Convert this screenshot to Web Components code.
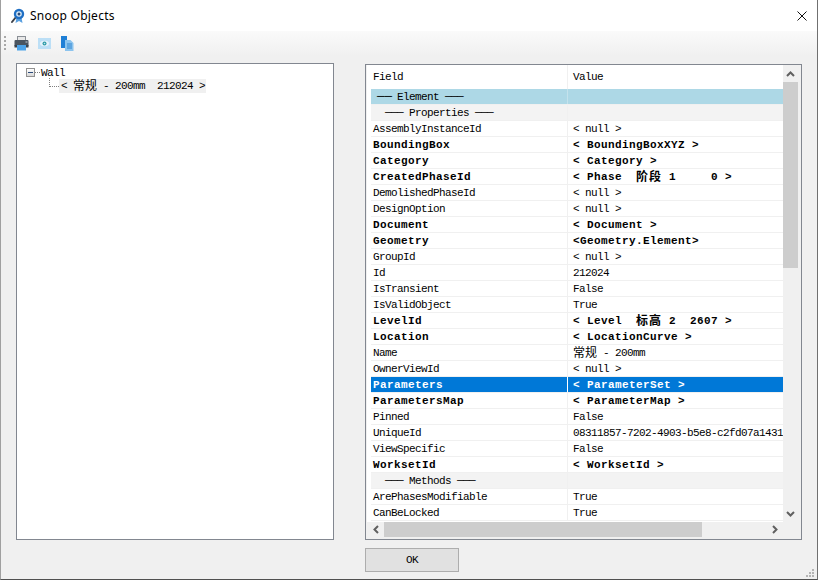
<!DOCTYPE html>
<html>
<head>
<meta charset="utf-8">
<title>Snoop Objects</title>
<style>
  html, body { margin: 0; padding: 0; background: #f0f0f0; }
  snoop-row .c { font-size: 12px; letter-spacing: 0; vertical-align: -1px; }
  snoop-row[kind="bold"] .c { letter-spacing: 1px; }
  snoop-row .d1 { font-size: 12.5px; letter-spacing: 0; margin-right: 5px; }
</style>
</head>
<body>
<snoop-window>
  <snoop-titlebar slot="title">Snoop Objects</snoop-titlebar>
  <snoop-toolbar slot="tools"></snoop-toolbar>
  <snoop-tree slot="left"></snoop-tree>
  <snoop-grid slot="right">
    <snoop-row kind="group"><span slot="field"><span class="d1">──</span>Element ───</span></snoop-row>
    <snoop-row kind="sub"><span slot="field">─── Properties ───</span></snoop-row>
    <snoop-row><span slot="field">AssemblyInstanceId</span>&lt; null &gt;</snoop-row>
    <snoop-row kind="bold"><span slot="field">BoundingBox</span>&lt; BoundingBoxXYZ &gt;</snoop-row>
    <snoop-row kind="bold"><span slot="field">Category</span>&lt; Category &gt;</snoop-row>
    <snoop-row kind="bold"><span slot="field">CreatedPhaseId</span>&lt; Phase  <span class="c">阶段</span> 1     0 &gt;</snoop-row>
    <snoop-row><span slot="field">DemolishedPhaseId</span>&lt; null &gt;</snoop-row>
    <snoop-row><span slot="field">DesignOption</span>&lt; null &gt;</snoop-row>
    <snoop-row kind="bold"><span slot="field">Document</span>&lt; Document &gt;</snoop-row>
    <snoop-row kind="bold"><span slot="field">Geometry</span>&lt;Geometry.Element&gt;</snoop-row>
    <snoop-row><span slot="field">GroupId</span>&lt; null &gt;</snoop-row>
    <snoop-row><span slot="field">Id</span>212024</snoop-row>
    <snoop-row><span slot="field">IsTransient</span>False</snoop-row>
    <snoop-row><span slot="field">IsValidObject</span>True</snoop-row>
    <snoop-row kind="bold"><span slot="field">LevelId</span>&lt; Level  <span class="c">标高</span> 2  2607 &gt;</snoop-row>
    <snoop-row kind="bold"><span slot="field">Location</span>&lt; LocationCurve &gt;</snoop-row>
    <snoop-row><span slot="field">Name</span><span class="c">常规</span> - 200mm</snoop-row>
    <snoop-row><span slot="field">OwnerViewId</span>&lt; null &gt;</snoop-row>
    <snoop-row kind="selected"><span slot="field">Parameters</span>&lt; ParameterSet &gt;</snoop-row>
    <snoop-row kind="bold"><span slot="field">ParametersMap</span>&lt; ParameterMap &gt;</snoop-row>
    <snoop-row><span slot="field">Pinned</span>False</snoop-row>
    <snoop-row><span slot="field">UniqueId</span>08311857-7202-4903-b5e8-c2fd07a1431</snoop-row>
    <snoop-row><span slot="field">ViewSpecific</span>False</snoop-row>
    <snoop-row kind="bold"><span slot="field">WorksetId</span>&lt; WorksetId &gt;</snoop-row>
    <snoop-row kind="sub"><span slot="field">─── Methods ───</span></snoop-row>
    <snoop-row><span slot="field">ArePhasesModifiable</span>True</snoop-row>
    <snoop-row><span slot="field">CanBeLocked</span>True</snoop-row>
  </snoop-grid>
  <snoop-button slot="action">OK</snoop-button>
</snoop-window>

<script>
const MONO = `"Liberation Mono", "Noto Sans CJK SC", monospace`;

class SnoopWindow extends HTMLElement {
  connectedCallback() {
    this.attachShadow({ mode: 'open' });
    this.shadowRoot.innerHTML = `
      <style>
        :host {
          display: flex;
          flex-direction: column;
          position: relative;
          box-sizing: border-box;
          width: 818px;
          height: 580px;
          background: #f0f0f0;
          border-left: 1px solid #a0a0a0;
          border-right: 1px solid #707070;
          border-bottom: 1px solid #505050;
          overflow: hidden;
        }
        .panes {
          display: grid;
          grid-template-columns: 318px 437px;
          column-gap: 31px;
          height: 477px;
          padding: 7px 0 0 15px;
        }
        .foot {
          display: flex;
          justify-content: flex-start;
          padding: 8px 0 0 364px;
        }
        .grip {
          position: absolute;
          right: 2px;
          bottom: 1px;
        }
      </style>
      <slot name="title"></slot>
      <slot name="tools"></slot>
      <div class="panes"><slot name="left"></slot><slot name="right"></slot></div>
      <div class="foot"><slot name="action"></slot></div>
      <svg class="grip" width="9" height="9" viewBox="0 0 9 9" fill="#b4b4b4">
        <rect x="6" y="0" width="2" height="2"/>
        <rect x="3" y="3" width="2" height="2"/><rect x="6" y="3" width="2" height="2"/>
        <rect x="0" y="6" width="2" height="2"/><rect x="3" y="6" width="2" height="2"/><rect x="6" y="6" width="2" height="2"/>
      </svg>`;
  }
}

class SnoopTitlebar extends HTMLElement {
  connectedCallback() {
    this.attachShadow({ mode: 'open' });
    this.shadowRoot.innerHTML = `
      <style>
        :host {
          display: flex;
          align-items: center;
          height: 31px;
          background: #fff;
          padding: 0 10px 0 9px;
          gap: 4px;
          font: 12px "Noto Sans", "Open Sans", sans-serif;
          letter-spacing: 0.25px;
          color: #000;
        }
        .text { flex: 1; }
      </style>
      <svg width="16" height="16" viewBox="0 0 16 16">
        <path d="M6 9 L2 14" stroke="#3c4048" stroke-width="2" stroke-linecap="round"/>
        <path d="M6.5 9.5 L5.5 15 L9 13 L12.5 15 L11.5 9.5z" fill="#5aa0e0"/>
        <circle cx="9" cy="6" r="5.2" fill="#1f6fc4"/>
        <circle cx="9" cy="6" r="2.8" fill="#dcecf8"/>
        <circle cx="9" cy="6" r="1.5" fill="#2c4c78"/>
      </svg>
      <span class="text"><slot></slot></span>
      <svg width="10" height="10" viewBox="0 0 10 10">
        <path d="M.5 .5 L9.5 9.5 M9.5 .5 L.5 9.5" stroke="#111" stroke-width="1" fill="none"/>
      </svg>`;
  }
}

class SnoopToolbar extends HTMLElement {
  connectedCallback() {
    this.attachShadow({ mode: 'open' });
    this.shadowRoot.innerHTML = `
      <style>
        :host {
          display: flex;
          align-items: center;
          height: 25px;
          padding-left: 3px;
          background: linear-gradient(#fafafa, #f0f0f0);
        }
        .dots {
          width: 2px;
          height: 15px;
          margin-right: 8px;
          background: repeating-linear-gradient(#a8a8a8 0 2px, transparent 2px 4px);
        }
        svg { display: block; margin-right: 8px; }
      </style>
      <div class="dots"></div>
      <svg width="15" height="15" viewBox="0 0 15 15">
        <rect x="3.5" y="0.5" width="8" height="4" fill="#e8e8e8" stroke="#8a8f96"/>
        <rect x="0.5" y="4" width="14" height="6.5" rx="1" fill="#4a5560"/>
        <rect x="0.5" y="9" width="14" height="2.5" fill="#39424c"/>
        <rect x="3" y="9" width="9" height="5.5" fill="#4da3e8"/>
        <rect x="11.5" y="5.5" width="2" height="1" fill="#c8d0d8"/>
      </svg>
      <svg width="16" height="15" viewBox="0 0 16 15" style="margin-left:0">
        <rect x="1" y="2" width="13" height="11" fill="#bcdff6"/>
        <ellipse cx="7.5" cy="7.5" rx="4.5" ry="2.7" fill="#e6f3fb"/>
        <circle cx="7.5" cy="7.5" r="2" fill="#2e9aa8"/>
        <circle cx="7.5" cy="7.5" r="0.8" fill="#bfe6ea"/>
      </svg>
      <svg width="15" height="16" viewBox="0 0 15 16">
        <path d="M0 0 H6 V10 H4 V12 H0z" fill="#1f7fd6"/>
        <path d="M4 4 H9.5 L12.5 7 V15 H4z" fill="#8cc4ee"/>
        <path d="M6 8 H11 M6 10 H11 M6 12 H11" stroke="#2f86d2" stroke-width="1"/>
      </svg>`;
  }
}

class SnoopTree extends HTMLElement {
  connectedCallback() {
    this.attachShadow({ mode: 'open' });
    this.shadowRoot.innerHTML = `
      <style>
        :host {
          display: block;
          box-sizing: border-box;
          height: 477px;
          background: #fff;
          border: 1px solid #828790;
          padding: 2px 0 0 9px;
          font: 11px/14px ${MONO};
          letter-spacing: -0.6px;
          color: #000;
        }
        .node { display: flex; align-items: center; height: 13px; }
        .box {
          box-sizing: border-box;
          width: 9px;
          height: 9px;
          border: 1px solid #919191;
          background: linear-gradient(#fff, #d8d8d8);
          display: flex;
          align-items: center;
          justify-content: center;
        }
        .box::after { content: ""; width: 5px; height: 1px; background: #2a4a7a; }
        .stub { width: 5px; border-top: 1px dotted #808080; margin-right: 1px; }
        .child { padding-left: 23px; height: 14px; }
        .elbow {
          width: 9px;
          height: 8px;
          margin-top: -7px;
          border-left: 1px dotted #808080;
          border-bottom: 1px dotted #808080;
        }
        .sel { background: #f0f0f0; padding: 0 1px 0 2px; white-space: pre; height: 14px; }
        .c { font-size: 12px; letter-spacing: 0; vertical-align: -1px; }
      </style>
      <div class="node"><span class="box"></span><span class="stub"></span><span>Wall</span></div>
      <div class="node child"><span class="elbow"></span><span class="sel">&lt; <span class="c">常规</span> - 200mm  212024 &gt;</span></div>`;
  }
}

class SnoopGrid extends HTMLElement {
  connectedCallback() {
    this.attachShadow({ mode: 'open' });
    this.shadowRoot.innerHTML = `
      <style>
        :host {
          display: grid;
          grid-template-columns: 1fr 17px;
          grid-template-rows: 457px 15px;
          box-sizing: border-box;
          height: 476px;
          margin-top: 1px;
          background: #f0f0f0;
          border: 1px solid #828790;
          padding: 0 1px 2px 1px;
          font: 11px/16px ${MONO};
          letter-spacing: -0.6px;
          color: #000;
        }
        .table { background: #fff; overflow: hidden; }
        .head {
          display: grid;
          grid-template-columns: 196px 1fr;
          height: 24px;
          line-height: 25px;
          margin-left: 4px;
        }
        .head span { padding-left: 2px; }
        .head span + span { border-left: 1px solid #f0f0f0; padding-left: 5px; }
        .vbar, .hbar { background: #f0f0f0; display: flex; }
        .vbar { flex-direction: column; align-items: flex-start; }
        .btn { display: flex; align-items: center; justify-content: center; flex: none; }
        .vbar .btn { width: 15px; height: 17px; }
        .vbar .thumb { width: 15px; height: 186px; background: #cdcdcd; flex: none; }
        .vbar .fill { flex: 1; }
        .hbar { grid-column: 1; align-items: stretch; }
        .hbar .btn { width: 17px; }
        .hbar .thumb { width: 318px; background: #cdcdcd; flex: none; }
        .hbar .fill { flex: 1; }
      </style>
      <div class="table">
        <div class="head"><span>Field</span><span>Value</span></div>
        <slot></slot>
      </div>
      <div class="vbar">
        <div class="btn"><svg width="9" height="6" viewBox="0 0 9 6"><path d="M1 5 L4.5 1.5 L8 5" fill="none" stroke="#606060" stroke-width="2"/></svg></div>
        <div class="thumb"></div>
        <div class="fill"></div>
        <div class="btn"><svg width="9" height="6" viewBox="0 0 9 6"><path d="M1 1 L4.5 4.5 L8 1" fill="none" stroke="#606060" stroke-width="2"/></svg></div>
      </div>
      <div class="hbar">
        <div class="btn"><svg width="6" height="9" viewBox="0 0 6 9"><path d="M5 1 L1.5 4.5 L5 8" fill="none" stroke="#606060" stroke-width="2"/></svg></div>
        <div class="thumb"></div>
        <div class="fill"></div>
        <div class="btn"><svg width="6" height="9" viewBox="0 0 6 9"><path d="M1 1 L4.5 4.5 L1 8" fill="none" stroke="#606060" stroke-width="2"/></svg></div>
      </div>`;
  }
}

class SnoopRow extends HTMLElement {
  connectedCallback() {
    this.attachShadow({ mode: 'open' });
    this.shadowRoot.innerHTML = `
      <style>
        :host {
          display: grid;
          grid-template-columns: 196px 1fr;
          box-sizing: border-box;
          height: 16px;
          margin-left: 4px;
          border-bottom: 1px solid #f0f0f0;
          line-height: 16px;
          white-space: pre;
          overflow: hidden;
        }
        .f { padding-left: 2px; overflow: hidden; }
        .v { padding-left: 5px; border-left: 1px solid #f0f0f0; overflow: hidden; }
        :host([kind="bold"]), :host([kind="selected"]) { font-weight: bold; letter-spacing: 0.4px; }
        :host([kind="group"]) { background: #add8e6; }
        :host([kind="group"]) .v { border-left-color: #c4e2ec; }
        :host([kind="group"]) .f { padding-left: 6px; }
        :host([kind="sub"]) { background: #f3f3f3; }
        :host([kind="sub"]) .f { padding-left: 14px; }
        :host([kind="selected"]) { background: #0078d7; color: #fff; }
        :host([kind="selected"]) .v { border-left-color: #fff; }
      </style>
      <div class="f"><slot name="field"></slot></div>
      <div class="v"><slot></slot></div>`;
  }
}

class SnoopButton extends HTMLElement {
  connectedCallback() {
    this.attachShadow({ mode: 'open' });
    this.shadowRoot.innerHTML = `
      <style>
        :host {
          display: flex;
          align-items: center;
          justify-content: center;
          box-sizing: border-box;
          width: 94px;
          height: 24px;
          background: #e1e1e1;
          border: 1px solid #adadad;
          font: 11px ${MONO};
          letter-spacing: -0.6px;
          color: #000;
        }
      </style>
      <slot></slot>`;
  }
}

customElements.define('snoop-window', SnoopWindow);
customElements.define('snoop-titlebar', SnoopTitlebar);
customElements.define('snoop-toolbar', SnoopToolbar);
customElements.define('snoop-tree', SnoopTree);
customElements.define('snoop-grid', SnoopGrid);
customElements.define('snoop-row', SnoopRow);
customElements.define('snoop-button', SnoopButton);
</script>
</body>
</html>
